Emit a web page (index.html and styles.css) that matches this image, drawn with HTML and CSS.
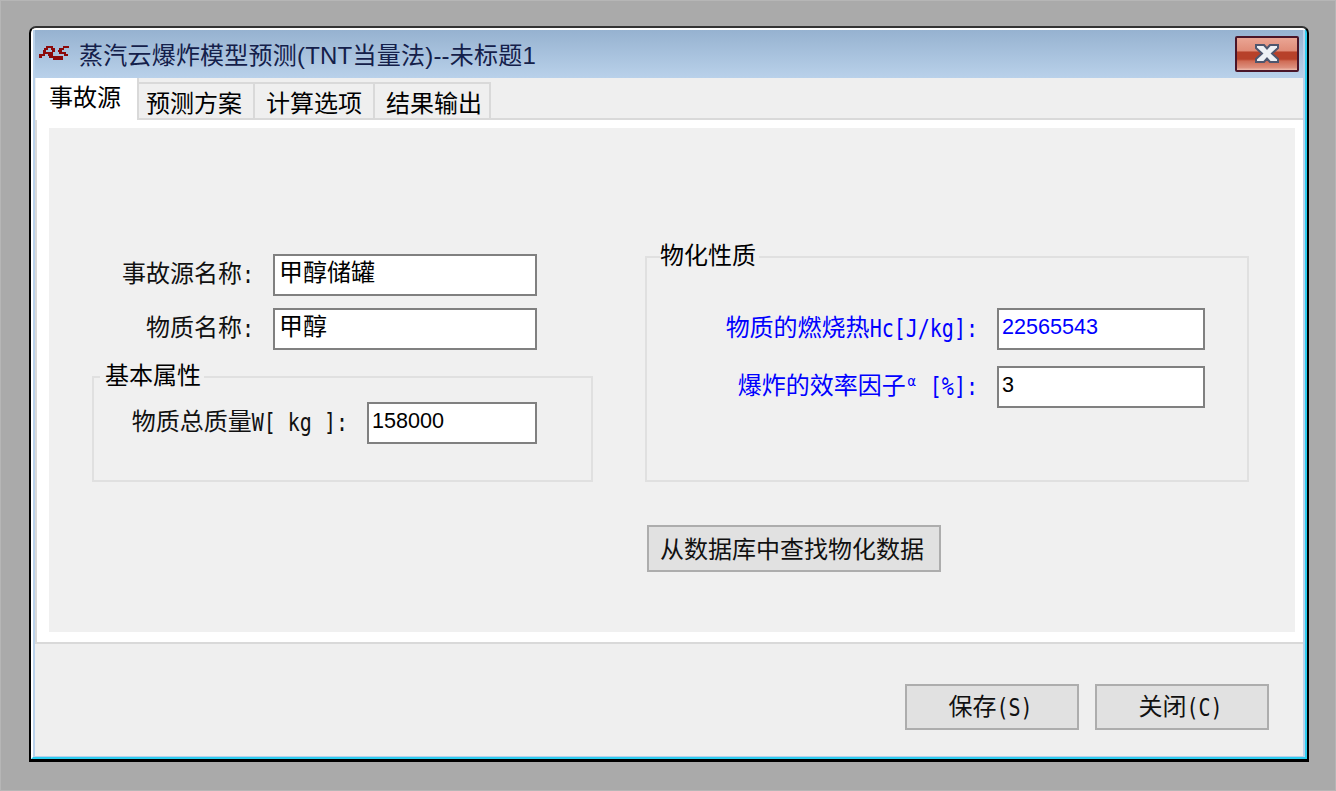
FILE: index.html
```html
<!DOCTYPE html>
<html lang="zh-CN">
<head>
<meta charset="utf-8">
<title>蒸汽云爆炸模型预测</title>
<link rel="stylesheet" href="styles.css">
</head>
<body>
<div class="window">
  <div class="frame-outer">
    <div class="frame-inner">
      <header class="titlebar">
        <svg class="logo" width="40" height="24" viewBox="0 0 40 24" shape-rendering="crispEdges">
          <path d="M10 6h7v2h-7zM27 6h6v2h-6zM8 8h4v2h-4zM15 8h4v2h-4zM23 8h5v2h-5zM7 10h3v2h-3zM16 10h3v2h-3zM22 10h4v2h-4zM7 12h10v2h-10zM23 12h7v2h-7zM3 14h6v2h-6zM12 14h5v2h-5zM28 14h4v2h-4zM3 16h3v2h-3zM13 16h6v2h-6zM18 16h9v2h-9zM17 18h10v2h-10z"/>
        </svg>
        <span class="title">蒸汽云爆炸模型预测(TNT当量法)--未标题1</span>
        <span class="close-x">
          <svg width="64" height="36" viewBox="0 0 64 36">
            <path class="x-outline" d="M21 9h8l3 3.5 3-3.5h8v3l-6 5.500 6 5.500v3h-8l-3-3.500-3 3.500h-8v-3l6-5.500-6-5.500z"/>
          </svg>
        </span>
      </header>
      <nav class="tabs">
        <div class="tab active">事故源</div>
        <div class="tab">预测方案</div>
        <div class="tab">计算选项</div>
        <div class="tab">结果输出</div>
        <div class="tab-rest"></div>
      </nav>
      <main class="sheet">
        <div class="panel">
          <section class="col-left">
            <div class="row row-name">
              <span class="label">事故源名称<span class="mono">:</span></span>
              <div class="field field-name cjk-val">甲醇储罐</div>
            </div>
            <div class="row row-name">
              <span class="label">物质名称<span class="mono">:</span></span>
              <div class="field field-name cjk-val">甲醇</div>
            </div>
            <fieldset class="group group-basic">
              <legend>基本属性</legend>
              <div class="row row-mass">
                <span class="label">物质总质量<span class="mono">W[ kg ]:</span></span>
                <div class="field field-mass">158000</div>
              </div>
            </fieldset>
          </section>
          <section class="col-right">
            <fieldset class="group group-phys">
              <legend>物化性质</legend>
              <div class="row row-phys">
                <span class="label blue">物质的燃烧热<span class="mono">Hc[J/kg]:</span></span>
                <div class="field field-phys blue">22565543</div>
              </div>
              <div class="row row-phys">
                <span class="label blue">爆炸的效率因子<span class="alpha">α</span><span class="mono"> [%]:</span></span>
                <div class="field field-phys">3</div>
              </div>
            </fieldset>
            <div class="btn btn-lookup">从数据库中查找物化数据</div>
          </section>
        </div>
      </main>
      <footer class="footer">
        <div class="btn btn-foot">保存<span class="mono">(S)</span></div>
        <div class="btn btn-foot">关闭<span class="mono">(C)</span></div>
      </footer>
    </div>
  </div>
</div>
</body>
</html>
```
FILE: styles.css
```css
* { box-sizing: border-box; }
html, body { margin: 0; padding: 0; }
body {
  width: 1336px;
  height: 791px;
  overflow: hidden;
  background: #aaaaaa;
  border: 1px solid #b6b6b6;
  padding: 25px 0 0 28px;
  font-family: "Noto Sans CJK SC", "Noto Sans", sans-serif;
  font-size: 24px;
  color: #000;
}
.window {
  width: 1280px;
  height: 736px;
  background: #000;
  border-style: solid;
  border-width: 2px 2px 3px 2px;
  border-color: #333 #000 #000 #000;
  border-radius: 7px 7px 0 0;
}
.frame-outer {
  height: 100%;
  border-style: solid;
  border-width: 2px;
  border-color: #fff #2ccdf0 #2ccdf0 #fff;
  border-radius: 5px 5px 0 0;
  background: #b9d1ea;
}
.frame-inner {
  height: 100%;
  display: flex;
  flex-direction: column;
  border-style: solid;
  border-width: 0 2px 1px 2px;
  border-color: #b9d1ea;
  background: #efefef;
}
.titlebar {
  height: 48px;
  flex: none;
  display: flex;
  align-items: center;
  background: linear-gradient(#96b2d0, #b9d1ea);
  padding-left: 1px;
  position: relative;
}
.logo {
  flex: none;
  margin-right: 3px;
  fill: #8c0a0a;
  position: relative;
  top: -2px;
}
.title {
  font-family: "Liberation Sans", "Noto Sans CJK SC", sans-serif;
  font-size: 24px;
  line-height: 28px;
  letter-spacing: 0.22px;
  color: #14204a;
  white-space: nowrap;
  position: relative;
  top: 2px;
}
.close-x {
  position: absolute;
  left: 1200px;
  top: 6px;
  width: 64px;
  height: 36px;
  border: 2px solid #4a1528;
  border-radius: 2px;
  background: linear-gradient(#eaa594 0, #e08c78 40%, #b7412a 44%, #b7412a 66%, #cf6c55 72%, #dc8e7c 92%, #eebcae 100%);
}
.close-x svg { display: block; margin: -2px; }
.x-outline { fill: #eef0f4; stroke: #4e566e; stroke-width: 2; }
.tabs {
  height: 42px;
  flex: none;
  display: flex;
  align-items: flex-end;
  padding-left: 1px;
  background: #efefef;
}
.tab {
  height: 38px;
  border-top: 2px solid #d9d9d9;
  border-right: 2px solid #d9d9d9;
  border-bottom: 2px solid #d9d9d9;
  padding: 0 0 0 11px;
  line-height: 36px;
  white-space: nowrap;
}
.tab.active {
  width: 103px;
  height: 42px;
  background: #fff;
  border: 0;
  border-right: 2px solid #d9d9d9;
  padding: 0 0 0 13px;
  line-height: 36px;
}
.tab:nth-child(2) { width: 116px; padding-left: 7px; }
.tab:nth-child(3) { width: 120px; }
.tab:nth-child(4) { width: 116px; }
.tab-rest {
  flex: 1;
  height: 2px;
  background: #d9d9d9;
}
.sheet {
  flex: none;
  height: 524px;
  padding: 8px 8px 10px 12px;
  background: #fff;
  border-left: 2px solid #d9d9d9;
  border-bottom: 2px solid #d9d9d9;
}
.panel {
  height: 100%;
  display: flex;
  gap: 52px;
  padding-left: 43px;
  background: #f0f0f0;
}
.col-left {
  width: 501px;
  padding-top: 126px;
}
.col-right {
  width: 604px;
  padding-top: 115px;
}
.row {
  display: flex;
  justify-content: flex-end;
  align-items: flex-start;
}
.row-name { padding-right: 56px; margin-bottom: 12px; }
.row-name .label { margin-right: 19px; }
.row-name + .group { margin-top: 13px; }
.label {
  line-height: 36px;
  white-space: pre;
  color: #111;
}
.label.blue { color: #0000ff; }
.mono {
  display: inline-block;
  font-family: "DejaVu Sans Mono", monospace;
  font-size: 20px;
  line-height: 30px;
  white-space: pre;
  transform: scaleY(1.2);
}
.alpha {
  display: inline-block;
  width: 12px;
  text-align: center;
  font-family: "DejaVu Sans Mono", monospace;
  font-size: 14px;
  line-height: 14px;
  vertical-align: 8px;
}
.field {
  height: 42px;
  background: #fff;
  border: 2px solid #808080;
  font-family: "Liberation Sans", "Noto Sans CJK SC", sans-serif;
  font-size: 21.6px;
  line-height: 34px;
  padding-left: 3px;
  white-space: nowrap;
}
.field.blue { color: #0000ff; }
.cjk-val {
  font-family: "Noto Sans CJK SC", sans-serif;
  font-size: 24px;
  line-height: 30px;
  padding-left: 4px;
}
.field-name { width: 264px; }
.field-mass { width: 170px; }
.field-phys { width: 208px; }
.group {
  margin: 0;
  padding: 0;
  min-width: 0;
  border: 2px solid #e0e0e0;
}
.group legend {
  height: 28px;
  line-height: 22px;
  padding: 0 3px 0 0;
}
.group-basic {
  padding: 11px 54px 36px 0;
  height: 119px;
}
.group-basic legend { margin-left: 6px; padding-left: 5px; }
.row-mass .label { margin-right: 19px; }
.group-phys {
  padding: 37px 42px 72px 0;
}
.group-phys legend { margin-left: 13px; padding-left: 0; }
.row-phys .label { margin-right: 19px; }
.row-phys + .row-phys { margin-top: 16px; }
.btn {
  background: #e1e1e1;
  border: 2px solid #adadad;
  text-align: center;
  white-space: nowrap;
  color: #111;
}
.btn-lookup {
  width: 294px;
  height: 47px;
  margin: 43px 0 0 2px;
  padding-right: 4px;
  line-height: 41px;
}
.footer {
  flex: 1;
  display: flex;
  justify-content: flex-end;
  align-items: flex-start;
  gap: 16px;
  padding: 40px 34px 0 0;
}
.btn-foot {
  width: 174px;
  height: 46px;
  padding-right: 3px;
  line-height: 38px;
}
```
